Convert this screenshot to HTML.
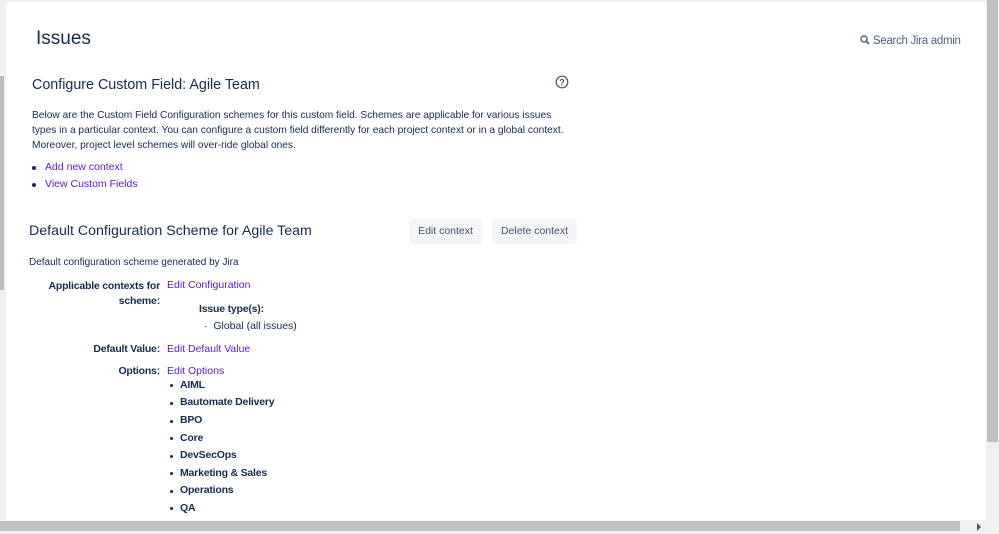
<!DOCTYPE html>
<html><head><style>
*{margin:0;padding:0;box-sizing:border-box}
body{width:999px;height:534px;overflow:hidden;background:#fff;font-family:"Liberation Sans",sans-serif;color:#172b4d;position:relative}
.a{position:absolute;white-space:nowrap}
.l{color:#5b16d9}
.t{font-size:10.5px}
.b{font-weight:bold;letter-spacing:-0.2px}
.dot{position:absolute;width:4px;height:4px;border-radius:50%;background:#172b4d}
</style></head><body>
<div class="a" style="left:0;top:0;width:999px;height:2px;background:#eee"></div>
<div class="a" style="left:0;top:0;width:6px;height:520px;background:#f0f0f0"></div>
<div class="a" style="left:0;top:76px;width:4px;height:214px;background:#bdbdbd"></div>
<div class="a" style="left:986px;top:0;width:13px;height:520px;background:#f0f0f0"></div>
<div class="a" style="left:987px;top:0;width:11px;height:442px;background:#c1c1c1"></div>
<div class="a" style="left:0;top:520px;width:999px;height:14px;background:#f0f0f0"></div>
<div class="a" style="left:0;top:521px;width:960px;height:10px;background:#c1c1c1"></div>
<div class="a" style="left:977px;top:523px;width:0;height:0;border-left:4px solid #555;border-top:4px solid transparent;border-bottom:4px solid transparent"></div>

<div class="a" style="left:36px;top:28px;font-size:19px">Issues</div>
<div class="a" style="left:860px;top:35px;font-size:11.5px;color:#505f79;letter-spacing:-0.3px"><svg width="10" height="10" viewBox="0 0 10 10" style="vertical-align:-1px;margin-right:3px"><circle cx="4" cy="4" r="3" fill="none" stroke="#505f79" stroke-width="1.4"/><path d="M6 6l3 3" stroke="#505f79" stroke-width="1.6"/></svg>Search Jira admin</div>

<div class="a" style="left:32px;top:77px;font-size:14.3px">Configure Custom Field: Agile Team</div>
<svg class="a" style="left:555px;top:75px" width="14" height="14" viewBox="0 0 14 14"><circle cx="7" cy="7" r="5.8" fill="none" stroke="#42526e" stroke-width="1.2"/><text x="7" y="10.3" font-size="9" text-anchor="middle" fill="#42526e" font-family="Liberation Sans" font-weight="bold">?</text></svg>
<div class="a" style="left:32px;top:108px;line-height:15px;font-size:10.2px">Below are the Custom Field Configuration schemes for this custom field. Schemes are applicable for various issues<br>types in a particular context. You can configure a custom field differently for each project context or in a global context.<br>Moreover, project level schemes will over-ride global ones.</div>
<div class="dot" style="left:32px;top:166px"></div><div class="a t l" style="left:45px;top:161px">Add new context</div>
<div class="dot" style="left:32px;top:183px"></div><div class="a t l" style="left:45px;top:178px">View Custom Fields</div>

<div class="a" style="left:29px;top:223px;font-size:14.2px">Default Configuration Scheme for Agile Team</div>
<div class="a t" style="left:409px;top:219px;width:73px;height:25px;background:#f4f5f7;color:#42526e;line-height:25px;text-align:center;border-radius:3px">Edit context</div>
<div class="a t" style="left:492px;top:219px;width:85px;height:25px;background:#f4f5f7;color:#42526e;line-height:25px;text-align:center;border-radius:3px">Delete context</div>
<div class="a" style="left:29px;top:257px;font-size:10px">Default configuration scheme generated by Jira</div>
<div class="a t b" style="left:40px;top:279px;width:120px;text-align:right;line-height:15px;white-space:normal">Applicable contexts for scheme:</div>
<div class="a t l" style="left:167px;top:279px">Edit Configuration</div>
<div class="a t b" style="left:199px;top:303px">Issue type(s):</div>
<div class="a t" style="left:204px;top:320px">·&nbsp; Global (all issues)</div>
<div class="a t b" style="left:30px;top:343px;width:130px;text-align:right">Default Value:</div>
<div class="a t l" style="left:167px;top:343px">Edit Default Value</div>
<div class="a t b" style="left:30px;top:365px;width:130px;text-align:right">Options:</div>
<div class="a t l" style="left:167px;top:365px">Edit Options</div>
<div class="dot" style="left:170px;top:384px;width:3px;height:3px"></div><div class="a t b" style="left:180px;top:379px">AIML</div>
<div class="dot" style="left:170px;top:402px;width:3px;height:3px"></div><div class="a t b" style="left:180px;top:396px">Bautomate Delivery</div>
<div class="dot" style="left:170px;top:420px;width:3px;height:3px"></div><div class="a t b" style="left:180px;top:414px">BPO</div>
<div class="dot" style="left:170px;top:437px;width:3px;height:3px"></div><div class="a t b" style="left:180px;top:432px">Core</div>
<div class="dot" style="left:170px;top:455px;width:3px;height:3px"></div><div class="a t b" style="left:180px;top:449px">DevSecOps</div>
<div class="dot" style="left:170px;top:472px;width:3px;height:3px"></div><div class="a t b" style="left:180px;top:467px">Marketing &amp; Sales</div>
<div class="dot" style="left:170px;top:490px;width:3px;height:3px"></div><div class="a t b" style="left:180px;top:484px">Operations</div>
<div class="dot" style="left:170px;top:507px;width:3px;height:3px"></div><div class="a t b" style="left:180px;top:502px">QA</div>
</body></html>
